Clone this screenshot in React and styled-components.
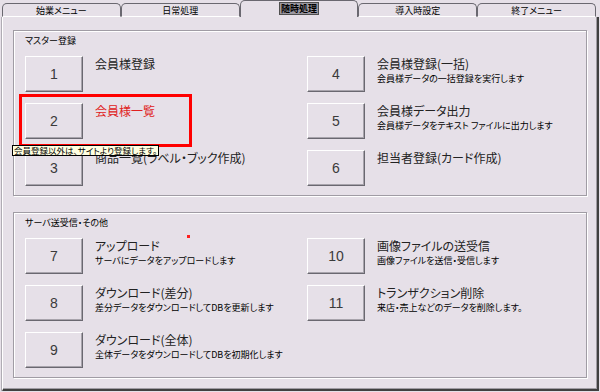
import React from "react";
import styled, { createGlobalStyle } from "styled-components";

const BG = "#e6e0e8";

const GlobalStyle = createGlobalStyle`
  html, body { margin: 0; padding: 0; background: ${BG}; }
  body { font-family: "Noto Sans CJK JP", "Noto Sans", sans-serif; }
  * { box-sizing: border-box; }
`;

const Window = styled.div`
  width: 600px;
  height: 392px;
  background: ${BG};
  display: flex;
  flex-direction: column;
  overflow: hidden;
`;

const TabBar = styled.div`
  display: flex;
  align-items: flex-end;
  height: 17px;
  padding: 0 4px 0 2px;
`;

const Tab = styled.div`
  flex: 1;
  height: ${(p) => (p.$active ? "17px" : "14px")};
  border: 1px solid #6a6870;
  border-bottom: ${(p) => (p.$active ? "none" : "1px solid #ffffff")};
  border-radius: 5px 5px 0 0;
  background: ${BG};
  display: flex;
  align-items: center;
  justify-content: center;
  font-size: 9px;
  line-height: 1;
  color: #000;
  font-feature-settings: "palt";
`;

const ActiveLabel = styled.span`
  background: #9b98a0;
  border: 1px solid #505050;
  font-weight: bold;
  padding: 1px 1px;
  margin-top: -2px;
`;

const Panel = styled.div`
  flex: 1;
  margin: 0 1px 1px 2px;
  border-left: 1px solid #ffffff;
  border-right: 2px solid #404040;
  border-bottom: 2px solid #404040;
  box-shadow: inset -1px -1px 0 #a09ca4, -1px 0 0 #b0acb4;
  padding: 13px 10px 0 10px;
  display: flex;
  flex-direction: column;
  gap: 16px;
`;

const Group = styled.div`
  position: relative;
  height: 166px;
  border: 1px solid #a09ca4;
  box-shadow: inset 1px 1px 0 #ffffff, 1px 1px 0 #ffffff;
  padding: 4px 0 0 11px;
`;

const GroupLabel = styled.div`
  font-size: 9px;
  line-height: 12px;
  height: 12px;
  color: #000;
  font-feature-settings: "palt";
`;

const Grid = styled.div`
  margin-top: 9px;
  display: grid;
  grid-template-columns: 282px 1fr;
  grid-template-rows: repeat(3, 36px);
  grid-auto-flow: column;
  row-gap: 11px;
`;

const Item = styled.div`
  position: relative;
  display: flex;
  gap: 12px;
  &::after {
    content: "";
    display: ${(p) => (p.$highlight ? "block" : "none")};
    position: absolute;
    left: -6px;
    top: -9px;
    width: 167px;
    height: 47px;
    border: 3px solid #ff0000;
    pointer-events: none;
  }
`;

const NumButton = styled.div`
  width: 58px;
  height: 36px;
  flex: none;
  background: ${BG};
  border-top: 1px solid #ffffff;
  border-left: 1px solid #ffffff;
  border-right: 1px solid #6a6870;
  border-bottom: 1px solid #6a6870;
  box-shadow: inset -1px -1px 0 #a8a4ac;
  display: flex;
  align-items: center;
  justify-content: center;
  font-family: "Liberation Sans", Arial, sans-serif;
  font-size: 14px;
  color: #3a3a3a;
`;

const TextBlock = styled.div`
  display: flex;
  flex-direction: column;
  padding-top: 1px;
  font-feature-settings: "palt";
`;

const Title = styled.div`
  font-size: 12px;
  font-weight: 400;
  line-height: 14px;
  color: ${(p) => (p.$red ? "#e02020" : "#222")};
`;

const Sub = styled.div`
  font-size: 9px;
  line-height: 12px;
  margin-top: 2px;
  color: #000;
`;

const Tooltip = styled.div`
  position: absolute;
  left: -13px;
  top: -5px;
  z-index: 2;
  background: #ffffe1;
  border: 1px solid #000;
  font-size: 8.5px;
  line-height: 9px;
  padding: 0 1px;
  white-space: nowrap;
  color: #000;
  font-feature-settings: "palt";
`;

const Dot = styled.div`
  position: absolute;
  left: 173px;
  top: 22px;
  width: 3px;
  height: 3px;
  background: #ff2020;
`;

const master = [
  { n: "1", t: "会員様登録" },
  { n: "2", t: "会員様一覧", red: true, highlight: true },
  { n: "3", t: "商品一覧(ラベル・ブック作成)", tooltip: "会員登録以外は、サイトより登録します。" },
  { n: "4", t: "会員様登録(一括)", s: "会員様データの一括登録を実行します" },
  { n: "5", t: "会員様データ出力", s: "会員様データをテキスト ファイルに出力します" },
  { n: "6", t: "担当者登録(カード作成)" },
];

const server = [
  { n: "7", t: "アップロード", s: "サーバにデータをアップロードします" },
  { n: "8", t: "ダウンロード(差分)", s: "差分データをダウンロードしてDBを更新します" },
  { n: "9", t: "ダウンロード(全体)", s: "全体データをダウンロードしてDBを初期化します" },
  { n: "10", t: "画像ファイルの送受信", s: "画像ファイルを送信・受信します" },
  { n: "11", t: "トランザクション削除", s: "来店・売上などのデータを削除します。" },
];

const tabs = ["始業メニュー", "日常処理", "随時処理", "導入時設定", "終了メニュー"];

function Entry({ item }) {
  return (
    <Item $highlight={item.highlight}>
      <NumButton>{item.n}</NumButton>
      <TextBlock>
        <Title $red={item.red}>{item.t}</Title>
        {item.s && <Sub>{item.s}</Sub>}
      </TextBlock>
      {item.tooltip && <Tooltip>{item.tooltip}</Tooltip>}
    </Item>
  );
}

export default function App() {
  return (
    <>
      <GlobalStyle />
      <Window>
        <TabBar>
          {tabs.map((t, i) => (
            <Tab key={t} $active={i === 2}>
              {i === 2 ? <ActiveLabel>{t}</ActiveLabel> : t}
            </Tab>
          ))}
        </TabBar>
        <Panel>
          <Group>
            <GroupLabel>マスター登録</GroupLabel>
            <Grid>
              {master.map((m) => (
                <Entry key={m.n} item={m} />
              ))}
            </Grid>
          </Group>
          <Group>
            <GroupLabel>サーバ送受信・その他</GroupLabel>
            <Dot />
            <Grid>
              {server.map((m) => (
                <Entry key={m.n} item={m} />
              ))}
            </Grid>
          </Group>
        </Panel>
      </Window>
    </>
  );
}
